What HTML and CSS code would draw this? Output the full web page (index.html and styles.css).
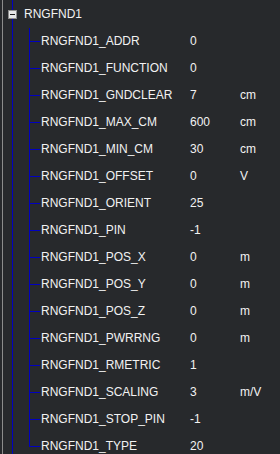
FILE: index.html
```html
<!DOCTYPE html>
<html lang="en">
<head>
    <meta charset="UTF-8">
    <meta name="viewport" content="width=device-width, initial-scale=1.0">
    <title>Parameter Tree</title>
    <link rel="stylesheet" href="styles.css">
</head>
<body>
    <div class="tree">
        <div class="root-row">
            <span class="expander"></span>
            <span class="root-label">RNGFND1</span>
        </div>
        <div class="children">
            <div class="item"><span>RNGFND1_ADDR</span><span>0</span><span></span></div>
            <div class="item"><span>RNGFND1_FUNCTION</span><span>0</span><span></span></div>
            <div class="item"><span>RNGFND1_GNDCLEAR</span><span>7</span><span>cm</span></div>
            <div class="item"><span>RNGFND1_MAX_CM</span><span>600</span><span>cm</span></div>
            <div class="item"><span>RNGFND1_MIN_CM</span><span>30</span><span>cm</span></div>
            <div class="item"><span>RNGFND1_OFFSET</span><span>0</span><span>V</span></div>
            <div class="item"><span>RNGFND1_ORIENT</span><span>25</span><span></span></div>
            <div class="item"><span>RNGFND1_PIN</span><span>-1</span><span></span></div>
            <div class="item"><span>RNGFND1_POS_X</span><span>0</span><span>m</span></div>
            <div class="item"><span>RNGFND1_POS_Y</span><span>0</span><span>m</span></div>
            <div class="item"><span>RNGFND1_POS_Z</span><span>0</span><span>m</span></div>
            <div class="item"><span>RNGFND1_PWRRNG</span><span>0</span><span>m</span></div>
            <div class="item"><span>RNGFND1_RMETRIC</span><span>1</span><span></span></div>
            <div class="item"><span>RNGFND1_SCALING</span><span>3</span><span>m/V</span></div>
            <div class="item"><span>RNGFND1_STOP_PIN</span><span>-1</span><span></span></div>
            <div class="item"><span>RNGFND1_TYPE</span><span>20</span><span></span></div>
        </div>
    </div>
</body>
</html>
```

FILE: styles.css
```css
body {
    margin: 0;
    background: #27292c;
    color: #f2f2f2;
    font-family: "Liberation Sans", Arial, sans-serif;
    font-size: 12px;
    overflow: hidden;
}

.tree {
    position: relative;
    margin-left: 2px;
    border-left: 1px solid #8c8c8c;
    min-height: 100vh;
}

/* line of the top level, runs past the bottom */
.tree::before {
    content: "";
    position: absolute;
    left: 9px;
    top: 0;
    bottom: 0;
    width: 1px;
    background: #0000c0;
}

.root-row {
    height: 27px;
    display: flex;
    align-items: center;
    padding-left: 5px;
}

.expander {
    position: relative;
    z-index: 1;
    box-sizing: border-box;
    width: 9px;
    height: 9px;
    border: 1px solid #8c8c8c;
    background: #e6e6e6;
    margin-top: 1px;
}

.expander::after {
    content: "";
    position: absolute;
    left: 1px;
    top: 3px;
    width: 5px;
    height: 1px;
    background: #1a1a1a;
}

.root-label {
    margin-left: 7px;
}

.children {
    margin-left: 26px;
}

.item {
    position: relative;
    height: 27px;
    display: grid;
    grid-template-columns: 149px 50px auto;
    align-items: center;
    padding-left: 12px;
}

.item::before {
    content: "";
    position: absolute;
    left: 0;
    top: 14px;
    width: 11px;
    height: 1px;
    background: #0000c0;
}

.item::after {
    content: "";
    position: absolute;
    left: 0;
    top: 0;
    width: 1px;
    height: 27px;
    background: #0000c0;
}

.item:first-child::after {
    top: 1px;
    height: 26px;
}

.item:last-child::after {
    height: 15px;
}
```
